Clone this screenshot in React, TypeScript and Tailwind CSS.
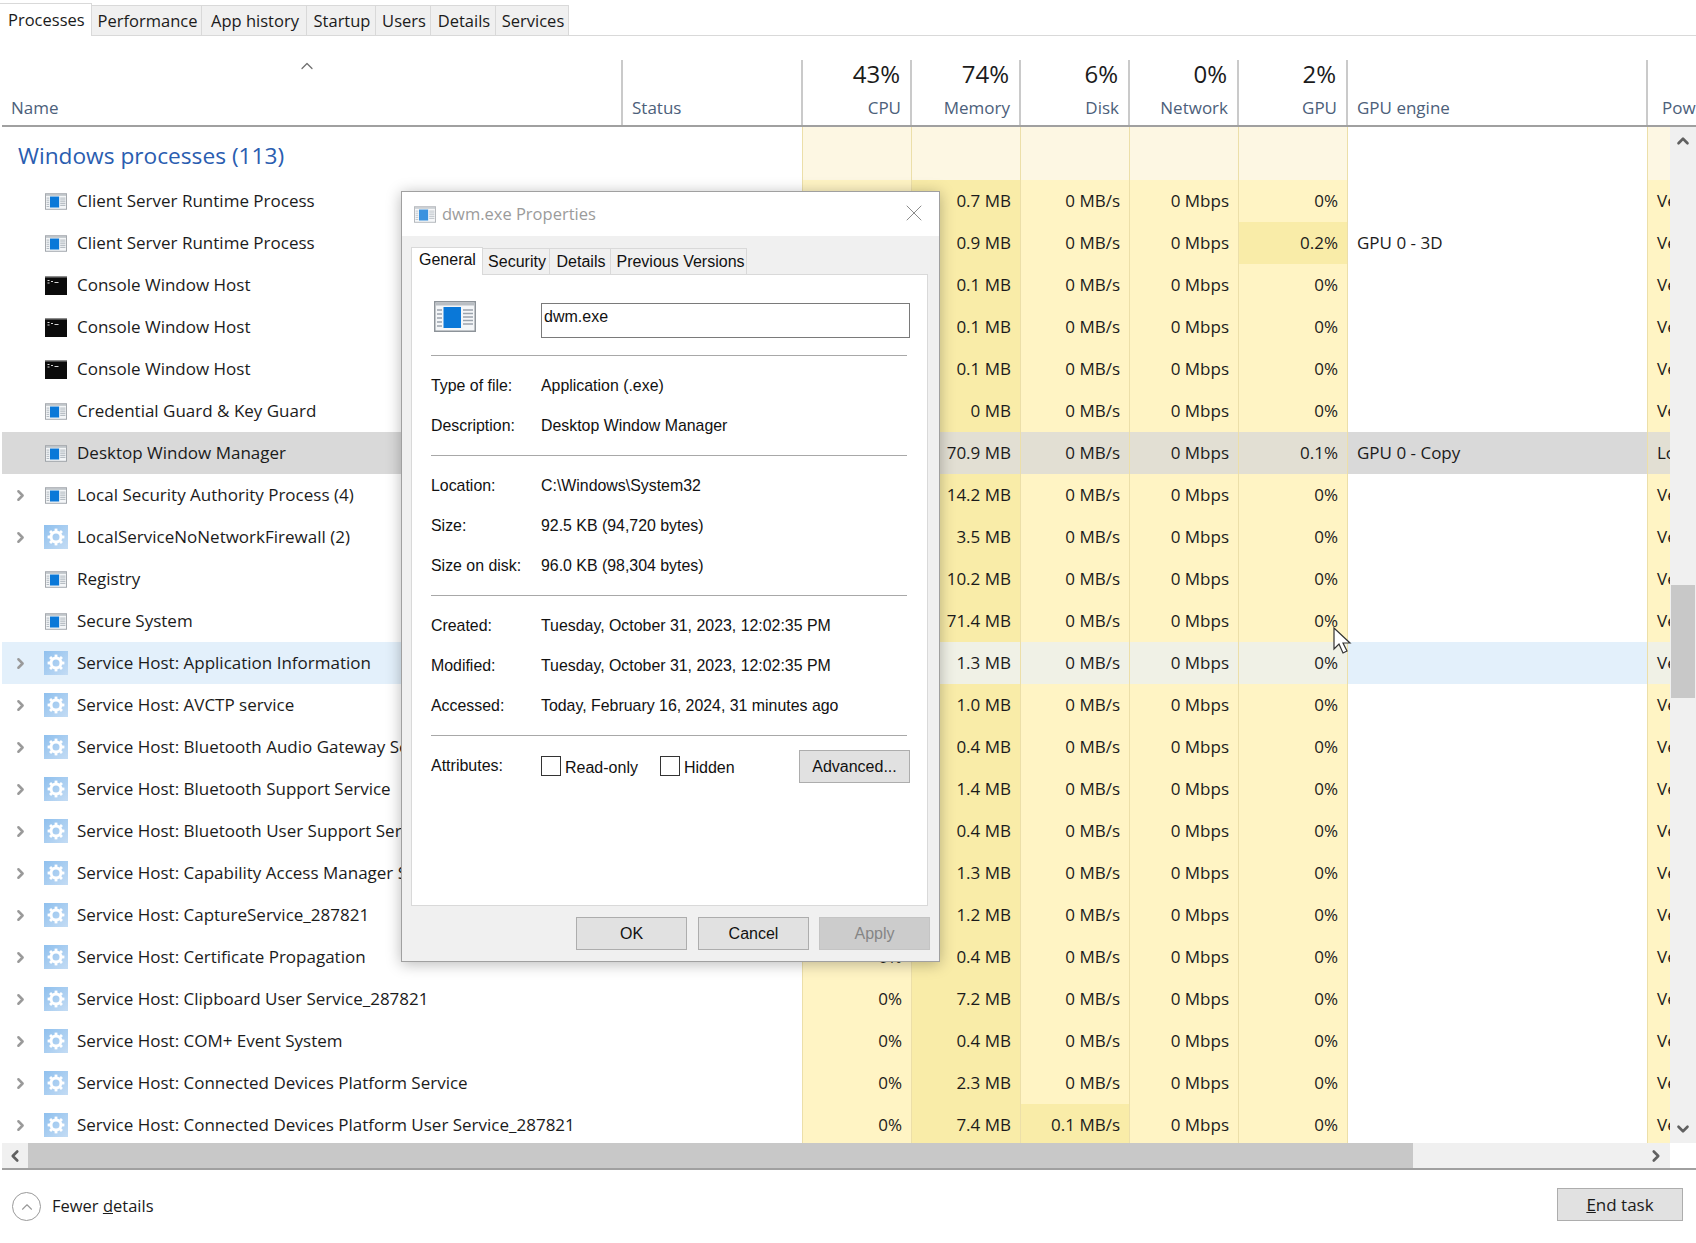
import { ChevronRight, ChevronUp, ChevronDown, ChevronLeft, X } from "lucide-react";

const UI = "font-['Open_Sans',sans-serif]";
const HEAD_GRID = "grid grid-cols-[621px_180px_109px_109px_109px_109px_109px_300px_48px]";
const ROW_GRID = "grid grid-cols-[621px_180px_109px_109px_109px_109px_109px_300px_22px]";

type Row = {
  name: string;
  icon: "app" | "console" | "gear";
  arrow?: boolean;
  mem: string;
  disk?: string;
  gpu?: string;
  engine?: string;
  power?: string;
  state?: "selected" | "hover";
};

const rows: Row[] = [
  { name: "Client Server Runtime Process", icon: "app", mem: "0.7 MB" },
  { name: "Client Server Runtime Process", icon: "app", mem: "0.9 MB", gpu: "0.2%", engine: "GPU 0 - 3D" },
  { name: "Console Window Host", icon: "console", mem: "0.1 MB" },
  { name: "Console Window Host", icon: "console", mem: "0.1 MB" },
  { name: "Console Window Host", icon: "console", mem: "0.1 MB" },
  { name: "Credential Guard & Key Guard", icon: "app", mem: "0 MB" },
  { name: "Desktop Window Manager", icon: "app", mem: "70.9 MB", gpu: "0.1%", engine: "GPU 0 - Copy", power: "Low", state: "selected" },
  { name: "Local Security Authority Process (4)", icon: "app", arrow: true, mem: "14.2 MB" },
  { name: "LocalServiceNoNetworkFirewall (2)", icon: "gear", arrow: true, mem: "3.5 MB" },
  { name: "Registry", icon: "app", mem: "10.2 MB" },
  { name: "Secure System", icon: "app", mem: "71.4 MB" },
  { name: "Service Host: Application Information", icon: "gear", arrow: true, mem: "1.3 MB", state: "hover" },
  { name: "Service Host: AVCTP service", icon: "gear", arrow: true, mem: "1.0 MB" },
  { name: "Service Host: Bluetooth Audio Gateway Service", icon: "gear", arrow: true, mem: "0.4 MB" },
  { name: "Service Host: Bluetooth Support Service", icon: "gear", arrow: true, mem: "1.4 MB" },
  { name: "Service Host: Bluetooth User Support Service_287821", icon: "gear", arrow: true, mem: "0.4 MB" },
  { name: "Service Host: Capability Access Manager Service", icon: "gear", arrow: true, mem: "1.3 MB" },
  { name: "Service Host: CaptureService_287821", icon: "gear", arrow: true, mem: "1.2 MB" },
  { name: "Service Host: Certificate Propagation", icon: "gear", arrow: true, mem: "0.4 MB" },
  { name: "Service Host: Clipboard User Service_287821", icon: "gear", arrow: true, mem: "7.2 MB" },
  { name: "Service Host: COM+ Event System", icon: "gear", arrow: true, mem: "0.4 MB" },
  { name: "Service Host: Connected Devices Platform Service", icon: "gear", arrow: true, mem: "2.3 MB" },
  { name: "Service Host: Connected Devices Platform User Service_287821", icon: "gear", arrow: true, mem: "7.4 MB", disk: "0.1 MB/s" },
];

function AppIcon({ className }: { className: string }) {
  return (
    <svg viewBox="0 0 42 31" className={className}>
      <rect x="0.75" y="0.75" width="40.5" height="29.5" fill="#f4f6f8" stroke="#8d9399" strokeWidth="1.5" />
      <rect x="1.5" y="1.5" width="39" height="3" fill="#b9bec3" />
      <rect x="9.5" y="6" width="17.5" height="21" fill="#0a78d8" />
      <path d="M3 9h5M3 13h5M3 17h5M3 21h5M3 25h5M29 9h10M29 12.5h10M29 16h10M29 19.5h10M29 23h10" stroke="#9aa3ac" strokeWidth="1.4" />
    </svg>
  );
}

function ConsoleIcon() {
  return (
    <svg viewBox="0 0 22 19" className="w-[22px] h-[19px]">
      <rect width="22" height="19" fill="#0b0b0b" />
      <rect x="0" y="0" width="22" height="1.5" fill="#8c8c8c" />
      <path d="M2.5 4.5h2M2.5 7h2M6 5.5h2M9.5 6.5h4" stroke="#d6d6d6" strokeWidth="1.2" />
    </svg>
  );
}

function GearIcon() {
  const teeth = [0, 45, 90, 135, 180, 225, 270, 315];
  return (
    <svg viewBox="0 0 24 24" className="w-6 h-6">
      <defs>
        <linearGradient id="gearbg" x1="0" y1="0" x2="1" y2="1">
          <stop offset="0" stopColor="#8fc0ee" />
          <stop offset="1" stopColor="#c4dcf4" />
        </linearGradient>
      </defs>
      <rect width="24" height="24" fill="url(#gearbg)" />
      <circle cx="12" cy="12" r="5" fill="none" stroke="#ffffff" strokeWidth="3" />
      {teeth.map((t) => (
        <rect key={t} x="10.6" y="3.6" width="2.8" height="3.4" fill="#ffffff" transform={`rotate(${t} 12 12)`} />
      ))}
    </svg>
  );
}

function NameIcon({ kind }: { kind: Row["icon"] }) {
  if (kind === "console") return <ConsoleIcon />;
  if (kind === "gear") return <GearIcon />;
  return <AppIcon className="w-[22px] h-[17px]" />;
}

function Cell({ value, tone }: { value?: string; tone: string }) {
  return (
    <div className={`flex items-center justify-end pr-[9px] border-r border-[#ecdfa9] ${tone}`}>{value}</div>
  );
}

function ProcessRow({ row }: { row: Row }) {
  const selected = row.state === "selected";
  const hover = row.state === "hover";
  const base = selected ? "bg-[#e2dfd3]" : hover ? "bg-[#f0f1e6]" : "bg-[#fff4c4]";
  const heavy = selected ? "bg-[#e2dfd3]" : hover ? "bg-[#f0f1e6]" : "bg-[#f9eca8]";
  const plain = selected ? "bg-[#d9d9d9]" : hover ? "bg-[#e3f0fb]" : "bg-white";
  return (
    <div className={`${ROW_GRID} h-[42px] shrink-0 text-[17px] text-[#1b1b1b]`}>
      <div className={`flex items-center overflow-hidden whitespace-nowrap ${plain}`}>
        <div className="w-[42px] pl-[10px] shrink-0">
          {row.arrow && <ChevronRight className="w-[17px] h-[17px] text-[#9a9a9a]" strokeWidth={3.5} />}
        </div>
        <div className="w-[33px] shrink-0 flex">
          <div className="w-6 flex justify-center">
            <NameIcon kind={row.icon} />
          </div>
        </div>
        <span>{row.name}</span>
      </div>
      <div className={`border-r border-[#ecdfa9] ${plain}`} />
      <Cell value="0%" tone={base} />
      <Cell value={row.mem} tone={heavy} />
      <Cell value={row.disk ?? "0 MB/s"} tone={row.disk ? heavy : base} />
      <Cell value="0 Mbps" tone={base} />
      <Cell value={row.gpu ?? "0%"} tone={row.gpu === "0.2%" ? heavy : base} />
      <div className={`flex items-center pl-[9px] border-r border-[#ecdfa9] ${plain}`}>{row.engine}</div>
      <div className={`flex items-center pl-[9px] overflow-hidden whitespace-nowrap ${base}`}>{row.power ?? "Very low"}</div>
    </div>
  );
}

function TabBar() {
  const tabs = [
    { label: "Performance", w: "w-[110px]" },
    { label: "App history", w: "w-[105px]" },
    { label: "Startup", w: "w-[69px]" },
    { label: "Users", w: "w-[55px]" },
    { label: "Details", w: "w-[65px]" },
    { label: "Services", w: "w-[73px]" },
  ];
  return (
    <div className="flex items-end h-[36px] border-b border-[#d9d9d9] shrink-0 text-[16.5px] text-[#1b1b1b]">
      <div className="w-[92px] h-[33px] -mb-px bg-white border-t border-r border-[#d9d9d9] pl-[8px] pt-[3px] leading-[26px]">Processes</div>
      {tabs.map((t) => (
        <div key={t.label} className={`${t.w} h-[30px] bg-[#f0f0f0] border-t border-r border-[#d9d9d9] flex items-center justify-center pl-[2px] pt-px`}>
          {t.label}
        </div>
      ))}
    </div>
  );
}

function HeadCol({ pct, label }: { pct: string; label: string }) {
  return (
    <div className="flex flex-col items-end pr-[9px] border-r-2 border-[#cacaca] pb-[5px]">
      <span className="text-[24px] leading-[30px] -mt-px mr-px text-[#1b1b1b]">{pct}</span>
      <span className="mt-auto text-[17px] leading-[24px] text-[#4c607a]">{label}</span>
    </div>
  );
}

function TableHeader() {
  return (
    <div className="pl-[2px] pt-[24px] shrink-0">
      <div className={`${HEAD_GRID} h-[67px] border-b-2 border-[#a0a0a0]`}>
        <div className="flex flex-col justify-between pb-[5px] pl-[9px] border-r-2 border-[#cacaca]">
          <ChevronUp className="w-[20px] h-[20px] ml-[286px] -mt-[4px] text-[#707070]" strokeWidth={1.5} />
          <span className="text-[17px] leading-[24px] text-[#4c607a]">Name</span>
        </div>
        <div className="flex items-end pb-[5px] pl-[9px] border-r-2 border-[#cacaca]">
          <span className="text-[17px] leading-[24px] text-[#4c607a]">Status</span>
        </div>
        <HeadCol pct="43%" label="CPU" />
        <HeadCol pct="74%" label="Memory" />
        <HeadCol pct="6%" label="Disk" />
        <HeadCol pct="0%" label="Network" />
        <HeadCol pct="2%" label="GPU" />
        <div className="flex items-end pb-[5px] pl-[9px] border-r-2 border-[#cacaca]">
          <span className="text-[17px] leading-[24px] text-[#4c607a]">GPU engine</span>
        </div>
        <div className="flex items-end pb-[5px] pl-[14px] overflow-hidden whitespace-nowrap">
          <span className="text-[17px] leading-[24px] text-[#4c607a]">Power usage</span>
        </div>
      </div>
    </div>
  );
}

function GroupRow() {
  const cols = ["c", "m", "d", "n", "g"];
  return (
    <div className={`${ROW_GRID} h-[53px] shrink-0`}>
      <div className="pl-[16px] pt-[12px] text-[22.7px] leading-[34px] text-[#2a5db0]">Windows processes (113)</div>
      <div className="border-r border-[#ecdfa9]" />
      {cols.map((c) => (
        <div key={c} className="bg-[#fdf7e3] border-r border-[#ecdfa9]" />
      ))}
      <div className="border-r border-[#ecdfa9]" />
      <div className="bg-[#fdf7e3]" />
    </div>
  );
}

function VerticalScrollbar() {
  return (
    <div className="w-[26px] bg-[#f0f0f0] flex flex-col items-center justify-between py-[5px] relative">
      <ChevronUp className="w-[18px] h-[18px] text-[#606060]" strokeWidth={3.5} />
      <div className="absolute left-[1px] top-[458px] w-[24px] h-[113px] bg-[#c8c8c8]" />
      <ChevronDown className="w-[18px] h-[18px] text-[#606060]" strokeWidth={3.5} />
    </div>
  );
}

function HorizontalScrollbar() {
  return (
    <div className="flex h-[25px] shrink-0 border-b-[2px] border-[#a0a0a0] box-content ml-[2px]">
      <div className="w-[26px] bg-[#f0f0f0] flex items-center justify-center">
        <ChevronLeft className="w-[18px] h-[18px] text-[#606060]" strokeWidth={3.5} />
      </div>
      <div className="w-[1385px] bg-[#c8c8c8]" />
      <div className="w-[257px] bg-[#f0f0f0] flex items-center justify-end pr-[5px]">
        <ChevronRight className="w-[18px] h-[18px] text-[#606060]" strokeWidth={3.5} />
      </div>
    </div>
  );
}

function Footer() {
  return (
    <div className="flex items-start justify-between pl-[12px] pr-[13px] pt-[18px] text-[16.5px] text-[#1b1b1b]">
      <div className="flex items-center mt-[4px]">
        <div className="w-[29px] h-[29px] rounded-full border border-[#9a9a9a] flex items-center justify-center">
          <ChevronUp className="w-[18px] h-[18px] text-[#9a9a9a]" strokeWidth={1.5} />
        </div>
        <span className="ml-[11px]">Fewer <span className="underline">d</span>etails</span>
      </div>
      <button className="w-[126px] h-[33px] bg-[#e1e1e1] border border-[#adadad] flex items-center justify-center text-[17px]">
        <span><span className="underline">E</span>nd task</span>
      </button>
    </div>
  );
}

function InfoRow({ label, value }: { label: string; value: string }) {
  return (
    <div className="grid grid-cols-[110px_1fr] h-10 items-center text-[15.9px]">
      <span>{label}</span>
      <span>{value}</span>
    </div>
  );
}

function InfoSection({ items }: { items: [string, string][] }) {
  return (
    <div className="pt-[10px] pb-[9px] border-b border-[#a8a8a8]">
      {items.map(([l, v]) => (
        <InfoRow key={l} label={l} value={v} />
      ))}
    </div>
  );
}

function DialogButton({ label, className }: { label: string; className: string }) {
  return (
    <button className={`flex items-center justify-center border ${className}`}>{label}</button>
  );
}

function PropertiesDialog() {
  const tabs = [
    { label: "Security", w: "w-[67px] pl-[2px]" },
    { label: "Details", w: "w-[61px] pl-[2px]" },
    { label: "Previous Versions", w: "w-[136px] pl-[4px]" },
  ];
  return (
    <div className="absolute left-[401px] top-[191px] w-[539px] h-[771px] bg-[#f0f0f0] border border-[#a0a0a0] shadow-[0_2px_14px_rgba(0,0,0,0.28)] font-['Liberation_Sans',sans-serif] text-[16px] text-[#111111] flex flex-col">
      <div className="h-[44px] bg-white flex items-center pl-[12px] pr-[11px] shrink-0">
        <AppIcon className="w-[22px] h-[17px] opacity-80" />
        <span className={`ml-[6px] text-[16.5px] text-[#9b9b9b] ${UI}`}>dwm.exe Properties</span>
        <X className="ml-auto -mt-[2px] w-[28px] h-[28px] text-[#8a8a8a]" strokeWidth={0.85} />
      </div>
      <div className="pl-[9px] pt-[10px] shrink-0 flex items-end h-[38px]">
        <div className="w-[72px] h-[28px] -mb-px z-10 bg-white border-t border-l border-r border-[#d9d9d9] pl-[7px] leading-[24px]">General</div>
        {tabs.map((t) => (
          <div key={t.label} className={`${t.w} h-[26px] border-t border-r border-[#d9d9d9] flex items-center justify-center`}>
            {t.label}
          </div>
        ))}
      </div>
      <div className="ml-[9px] w-[517px] h-[632px] bg-white border border-[#d9d9d9] pl-[19px] pr-[20px] pt-[26px] shrink-0">
        <div className="flex items-start pb-[17px] border-b border-[#a8a8a8]">
          <AppIcon className="ml-[3px] w-[42px] h-[31px] shrink-0" />
          <div className="ml-[65px] mt-[2px] -mr-[3px] flex-1 h-[35px] border border-[#7a7a7a] pl-[2px] leading-[26px]">dwm.exe</div>
        </div>
        <InfoSection items={[["Type of file:", "Application (.exe)"], ["Description:", "Desktop Window Manager"]]} />
        <InfoSection items={[["Location:", "C:\\Windows\\System32"], ["Size:", "92.5 KB (94,720 bytes)"], ["Size on disk:", "96.0 KB (98,304 bytes)"]]} />
        <InfoSection items={[["Created:", "Tuesday, October 31, 2023, 12:02:35 PM"], ["Modified:", "Tuesday, October 31, 2023, 12:02:35 PM"], ["Accessed:", "Today, February 16, 2024, 31 minutes ago"]]} />
        <div className="flex items-start pt-[14px] -mr-[3px]">
          <span className="w-[110px] mt-[4px]">Attributes:</span>
          <div className="w-[20px] h-[20px] mt-[6px] border border-[#333333]" />
          <span className="ml-[4px] mt-[6px]">Read-only</span>
          <div className="ml-[22px] w-[20px] h-[20px] mt-[6px] border border-[#333333]" />
          <span className="ml-[4px] mt-[6px]">Hidden</span>
          <DialogButton label="Advanced..." className="ml-auto w-[111px] h-[33px] bg-[#e1e1e1] border-[#adadad]" />
        </div>
      </div>
      <div className="flex justify-end gap-[11px] pr-[9px] pt-[11px]">
        <DialogButton label="OK" className="w-[111px] h-[33px] bg-[#e1e1e1] border-[#adadad]" />
        <DialogButton label="Cancel" className="-mr-px w-[111px] h-[33px] bg-[#e1e1e1] border-[#adadad]" />
        <DialogButton label="Apply" className="w-[111px] h-[33px] bg-[#cccccc] border-[#c4c4c4] text-[#858585]" />
      </div>
    </div>
  );
}

function Cursor() {
  return (
    <svg viewBox="0 0 20 28" className="absolute left-[1333px] top-[627px] w-[20px] h-[28px]">
      <path d="M1 1v21l5-5 4 9 4-2-4-8h7z" fill="#ffffff" stroke="#333333" strokeWidth="1.2" strokeLinejoin="miter" />
    </svg>
  );
}

export default function App() {
  return (
    <div className={`relative w-[1696px] h-[1243px] overflow-hidden bg-white flex flex-col ${UI}`}>
      <TabBar />
      <TableHeader />
      <div className="flex h-[1016px] shrink-0 pl-[2px]">
        <div className="w-[1668px] h-full overflow-hidden flex flex-col">
          <GroupRow />
          {rows.map((r, i) => (
            <ProcessRow key={i} row={r} />
          ))}
        </div>
        <VerticalScrollbar />
      </div>
      <HorizontalScrollbar />
      <Footer />
      <PropertiesDialog />
      <Cursor />
    </div>
  );
}
